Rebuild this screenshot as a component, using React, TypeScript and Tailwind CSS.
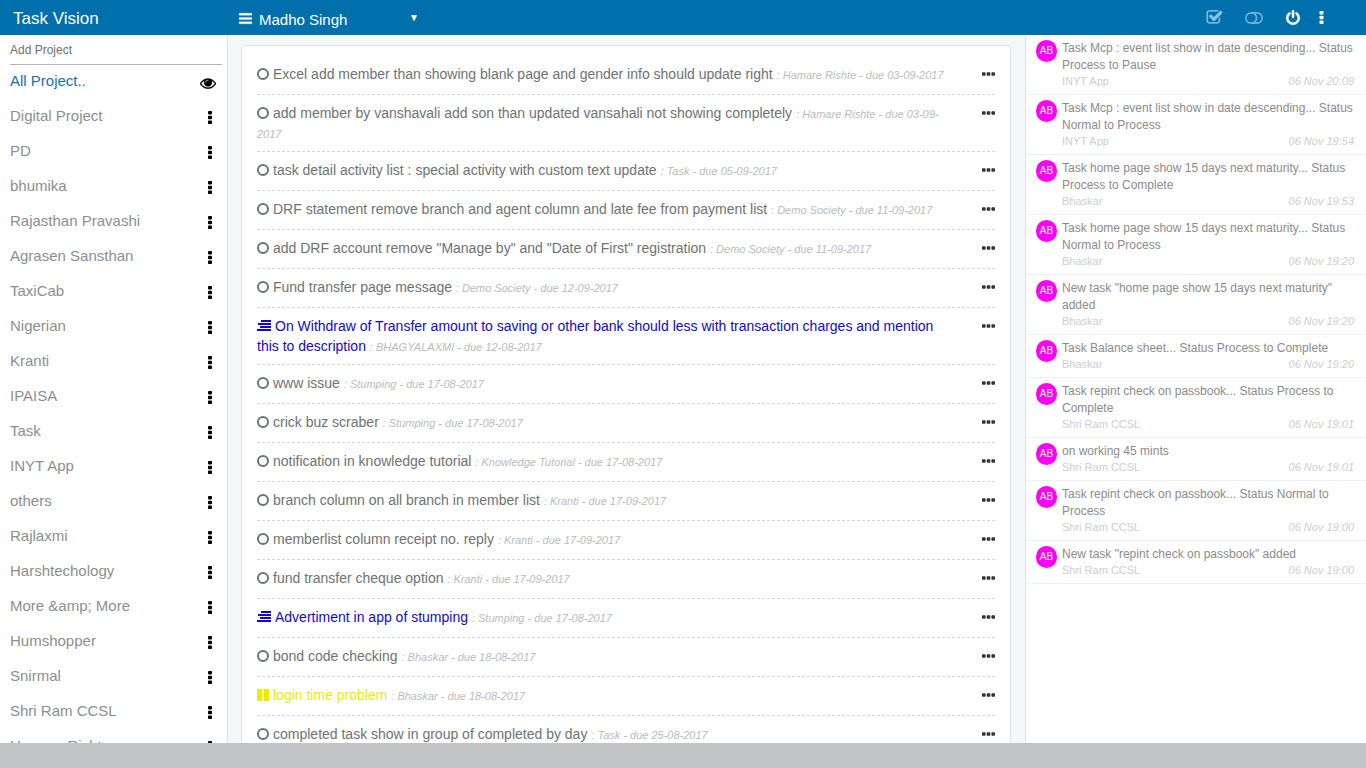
import { useState } from 'react';
import clsx from 'clsx';

type TaskStatus = 'open' | 'process' | 'pause';

interface Task {
  title: string;
  project: string;
  due: string;
  status?: TaskStatus;
}

interface Activity {
  text: string;
  project: string;
  time: string;
}

const PROJECTS = [
  'Digital Project',
  'PD',
  'bhumika',
  'Rajasthan Pravashi',
  'Agrasen Sansthan',
  'TaxiCab',
  'Nigerian',
  'Kranti',
  'IPAISA',
  'Task',
  'INYT App',
  'others',
  'Rajlaxmi',
  'Harshtechology',
  'More &amp; More',
  'Humshopper',
  'Snirmal',
  'Shri Ram CCSL',
  'Hamare Rishte',
];

const TASKS: Task[] = [
  { title: 'Excel add member than showing blank page and gender info should update right', project: 'Hamare Rishte', due: '03-09-2017' },
  { title: 'add member by vanshavali add son than updated vansahali not showing completely', project: 'Hamare Rishte', due: '03-09-2017' },
  { title: 'task detail activity list : special activity with custom text update', project: 'Task', due: '05-09-2017' },
  { title: 'DRF statement remove branch and agent column and late fee from payment list', project: 'Demo Society', due: '11-09-2017' },
  { title: 'add DRF account remove "Manage by" and "Date of First" registration', project: 'Demo Society', due: '11-09-2017' },
  { title: 'Fund transfer page message', project: 'Demo Society', due: '12-09-2017' },
  {
    title: 'On Withdraw of Transfer amount to saving or other bank should less with transaction charges and mention this to description',
    project: 'BHAGYALAXMI',
    due: '12-08-2017',
    status: 'process',
  },
  { title: 'www issue', project: 'Stumping', due: '17-08-2017' },
  { title: 'crick buz scraber', project: 'Stumping', due: '17-08-2017' },
  { title: 'notification in knowledge tutorial', project: 'Knowledge Tutorial', due: '17-08-2017' },
  { title: 'branch column on all branch in member list', project: 'Kranti', due: '17-09-2017' },
  { title: 'memberlist column receipt no. reply', project: 'Kranti', due: '17-09-2017' },
  { title: 'fund transfer cheque option', project: 'Kranti', due: '17-09-2017' },
  { title: 'Advertiment in app of stumping', project: 'Stumping', due: '17-08-2017', status: 'process' },
  { title: 'bond code checking', project: 'Bhaskar', due: '18-08-2017' },
  { title: 'login time problem', project: 'Bhaskar', due: '18-08-2017', status: 'pause' },
  { title: 'completed task show in group of completed by day', project: 'Task', due: '25-08-2017' },
];

const ACTIVITIES: Activity[] = [
  { text: 'Task Mcp : event list show in date descending... Status Process to Pause', project: 'INYT App', time: '06 Nov 20:09' },
  { text: 'Task Mcp : event list show in date descending... Status Normal to Process', project: 'INYT App', time: '06 Nov 19:54' },
  { text: 'Task home page show 15 days next maturity... Status Process to Complete', project: 'Bhaskar', time: '06 Nov 19:53' },
  { text: 'Task home page show 15 days next maturity... Status Normal to Process', project: 'Bhaskar', time: '06 Nov 19:20' },
  { text: 'New task "home page show 15 days next maturity" added', project: 'Bhaskar', time: '06 Nov 19:20' },
  { text: 'Task Balance sheet... Status Process to Complete', project: 'Bhaskar', time: '06 Nov 19:20' },
  { text: 'Task repint check on passbook... Status Process to Complete', project: 'Shri Ram CCSL', time: '06 Nov 19:01' },
  { text: 'on working 45 mints', project: 'Shri Ram CCSL', time: '06 Nov 19:01' },
  { text: 'Task repint check on passbook... Status Normal to Process', project: 'Shri Ram CCSL', time: '06 Nov 19:00' },
  { text: 'New task "repint check on passbook" added', project: 'Shri Ram CCSL', time: '06 Nov 19:00' },
];

const ICONS = {
  bars: 'M1664 1344v128q0 26-19 45t-45 19h-1408q-26 0-45-19t-19-45v-128q0-26 19-45t45-19h1408q26 0 45 19t19 45zm0-512v128q0 26-19 45t-45 19h-1408q-26 0-45-19t-19-45v-128q0-26 19-45t45-19h1408q26 0 45 19t19 45zm0-512v128q0 26-19 45t-45 19h-1408q-26 0-45-19t-19-45v-128q0-26 19-45t45-19h1408q26 0 45 19t19 45z',
  eye: 'M1664 960q-152-236-381-353 61 104 61 225 0 185-131.5 316.5t-316.5 131.5-316.5-131.5-131.5-316.5q0-121 61-225-229 117-381 353 133 205 333.5 326.5t434.5 121.5 434.5-121.5 333.5-326.5zm-720-384q0-20-14-34t-34-14q-125 0-214.5 89.5t-89.5 214.5q0 20 14 34t34 14 34-14 14-34q0-86 61-147t147-61q20 0 34-14t14-34zm848 384q0 34-20 69-140 230-376.5 368.5t-499.5 138.5-499.5-139-376.5-368q-20-35-20-69t20-69q140-229 376.5-368t499.5-139 499.5 139 376.5 368q20 35 20 69z',
  power: 'M1664 896q0 156-61 298t-164 245-245 164-298 61-298-61-245-164-164-245-61-298q0-182 80.5-343t226.5-270q43-32 95.5-25t83.5 50q32 42 24.5 94.5t-49.5 84.5q-98 74-151.5 181t-53.5 228q0 104 40.5 198.5t109.5 163.5 163.5 109.5 198.5 40.5 198.5-40.5 163.5-109.5 109.5-163.5 40.5-198.5q0-121-53.5-228t-151.5-181q-42-32-49.5-84.5t24.5-94.5q31-43 84-50t95 25q146 109 226.5 270t80.5 343zm-640-768v640q0 52-38 90t-90 38-90-38-38-90v-640q0-52 38-90t90-38 90 38 38 90z',
  checkSquare: 'M1472 930v318q0 119-84.5 203.5t-203.5 84.5h-832q-119 0-203.5-84.5t-84.5-203.5v-832q0-119 84.5-203.5t203.5-84.5h832q63 0 117 25 15 7 18 23 3 17-9 29l-49 49q-10 10-23 10-3 0-9-2-23-6-45-6h-832q-66 0-113 47t-47 113v832q0 66 47 113t113 47h832q66 0 113-47t47-113v-254q0-13 9-22l64-64q10-10 23-10 6 0 12 3 20 8 20 29zm231-489l-814 814q-24 24-57 24t-57-24l-430-430q-24-24-24-57t24-57l110-110q24-24 57-24t57 24l263 263 647-647q24-24 57-24t57 24l110 110q24 24 24 57t-24 57z',
};

function Icon({ name, className }: { name: keyof typeof ICONS; className?: string }) {
  return (
    <svg viewBox="0 0 1792 1792" fill="currentColor" stroke="currentColor" strokeWidth="30" aria-hidden="true" className={className}>
      <path d={ICONS[name]} />
    </svg>
  );
}

function ToggleIcon() {
  return (
    <svg viewBox="0 0 18 12" fill="none" stroke="currentColor" strokeWidth="1.6" aria-hidden="true" className="h-3 w-[18px]">
      <rect x="0.8" y="0.9" width="16.4" height="10.2" rx="5.1" />
      <path d="M6.5 0.9a5.1 5.1 0 0 1 0 10.2" />
    </svg>
  );
}

function DotsVertical({ className }: { className?: string }) {
  return (
    <svg viewBox="0 0 4 13" fill="currentColor" aria-hidden="true" className={className}>
      <rect x="0" y="0" width="4" height="3.4" rx="0.8" />
      <rect x="0" y="4.8" width="4" height="3.4" rx="0.8" />
      <rect x="0" y="9.6" width="4" height="3.4" rx="0.8" />
    </svg>
  );
}

function DotsHorizontal() {
  return (
    <svg viewBox="0 0 13 4" fill="currentColor" aria-hidden="true" className="h-1 w-[13px]">
      <rect x="0" y="0.3" width="3.6" height="3.4" rx="0.8" />
      <rect x="4.7" y="0.3" width="3.6" height="3.4" rx="0.8" />
      <rect x="9.4" y="0.3" width="3.6" height="3.4" rx="0.8" />
    </svg>
  );
}

function Header() {
  const [member, setMember] = useState('Madho Singh');

  return (
    <header className="flex h-[35px] shrink-0 items-center bg-[#0070ad] text-white">
      <h1 className="w-[238px] shrink-0 pl-[13px] pt-0.5 text-[17px] leading-6">Task Vision</h1>
      <button type="button" aria-label="Toggle menu" className="pt-0.5">
        <Icon name="bars" className="h-[15px] w-[15px]" />
      </button>
      <div className="relative ml-1.5 mt-1">
        <select
          aria-label="Member"
          value={member}
          onChange={(e) => setMember(e.target.value)}
          className="w-40 appearance-none bg-transparent text-[15px] leading-5 outline-none"
        >
          <option>Madho Singh</option>
        </select>
        <span className="pointer-events-none absolute right-0 top-0 text-[10px] leading-5">▼</span>
      </div>
      <div className="ml-auto flex items-center pr-[42px]">
        <button type="button" aria-label="Completed tasks" className="mr-[22px] text-[#8cc4e6]">
          <Icon name="checkSquare" className="h-[17px] w-[17px]" />
        </button>
        <button type="button" aria-label="Toggle view" className="mr-[22px] text-[#6fb4dd]">
          <ToggleIcon />
        </button>
        <button type="button" aria-label="Log out" className="mr-[18px]">
          <Icon name="power" className="h-4 w-4" />
        </button>
        <button type="button" aria-label="More">
          <DotsVertical className="h-[13px] w-[5px]" />
        </button>
      </div>
    </header>
  );
}

function Sidebar() {
  return (
    <aside className="w-[228px] shrink-0 overflow-hidden border-r border-[#dde6e9] bg-white pl-[10px] pr-[5px]">
      <input
        type="text"
        aria-label="Add Project"
        placeholder="Add Project"
        className="block h-[30px] w-full border-b border-[#b5b5b5] text-xs text-[#555] outline-none placeholder:text-[#6f6f6f]"
      />
      <nav className="text-[15px]">
        <div className="flex h-[35px] items-center justify-between pb-0.5 pr-1.5 text-[#1672ad]">
          <a href="#all">All Project..</a>
          <button type="button" aria-label="Show all" className="pt-0.5 text-black">
            <Icon name="eye" className="h-4 w-4" />
          </button>
        </div>
        {PROJECTS.map((name) => (
          <div key={name} className="flex h-[35px] items-center justify-between pb-0.5 pr-2.5 text-[#8a8f91]">
            <a href="#project">{name}</a>
            <button type="button" aria-label={`${name} options`} className="pt-0.5 text-black">
              <DotsVertical className="h-[13px] w-1" />
            </button>
          </div>
        ))}
      </nav>
    </aside>
  );
}

function StatusIcon({ status }: { status: TaskStatus }) {
  if (status === 'process') {
    return (
      <svg viewBox="0 0 14 12" fill="currentColor" aria-hidden="true" className="mr-1 inline h-3 w-[14px] align-[-1px]">
        <path d="M4 0h10v2H4zM1 3h13v2H1zM3 6h11v2H3zM0 9h14v2H0z" />
      </svg>
    );
  }
  if (status === 'pause') {
    return (
      <svg viewBox="0 0 12 12" fill="currentColor" aria-hidden="true" className="mr-1 inline h-3 w-3 align-[-1px]">
        <rect width="5.4" height="12" rx="0.4" />
        <rect x="6.6" width="5.4" height="12" rx="0.4" />
      </svg>
    );
  }
  return (
    <svg viewBox="0 0 12 12" fill="none" stroke="currentColor" strokeWidth="2" aria-hidden="true" className="mr-1 inline h-3 w-3 align-[-1px]">
      <circle cx="6" cy="6" r="5" />
    </svg>
  );
}

function TaskRow({ task }: { task: Task }) {
  const status = task.status ?? 'open';

  return (
    <li className="flex items-start justify-between border-b border-dashed border-[#d6d6d6] py-2">
      <p
        className={clsx(
          'flex-1 text-sm leading-5',
          status === 'open' && 'text-[#6e7273]',
          status === 'process' && 'text-[#1208cf]',
          status === 'pause' && 'text-[#eeea00]',
        )}
      >
        <StatusIcon status={status} />
        {task.title}{' '}
        <em className="text-[11px] leading-4 text-[#b9bcbd]">
          : {task.project} - due {task.due}
        </em>
      </p>
      <button type="button" aria-label="Task options" className="ml-8 flex h-[22px] items-center pb-0.5 text-[#333]">
        <DotsHorizontal />
      </button>
    </li>
  );
}

function ActivityRow({ activity }: { activity: Activity }) {
  return (
    <li className="flex border-b border-[#edf1f2] py-[5px] pl-[10px] pr-3 text-xs">
      <span className="flex h-[22px] w-[21px] shrink-0 items-center justify-center rounded-full bg-[#ff00f6] text-[10px] text-white">
        AB
      </span>
      <div className="ml-[5px] flex-1">
        <p className="leading-[17px] text-[#8b8b8b]">{activity.text}</p>
        <div className="flex justify-between text-[11px] leading-[15px] text-[#cecece]">
          <span>{activity.project}</span>
          <em>{activity.time}</em>
        </div>
      </div>
    </li>
  );
}

export default function App() {
  return (
    <div className="flex h-screen flex-col overflow-hidden bg-[#f3f7f8] font-['Liberation_Sans',Arial,sans-serif]">
      <Header />
      <div className="flex min-h-0 flex-1">
        <Sidebar />
        <main className="min-w-0 flex-1 overflow-hidden pl-[13px] pr-[14px] pt-[10px]">
          <ul className="rounded border border-[#dde6e9] bg-white px-[15px] py-[10px]">
            {TASKS.map((task) => (
              <TaskRow key={task.title} task={task} />
            ))}
          </ul>
        </main>
        <aside className="w-[341px] shrink-0 overflow-hidden border-l border-[#dde6e9] bg-white">
          <ul>
            {ACTIVITIES.map((activity) => (
              <ActivityRow key={activity.text + activity.time} activity={activity} />
            ))}
          </ul>
        </aside>
      </div>
      <footer className="h-[25px] shrink-0 bg-[#c3c4c6]" />
    </div>
  );
}
